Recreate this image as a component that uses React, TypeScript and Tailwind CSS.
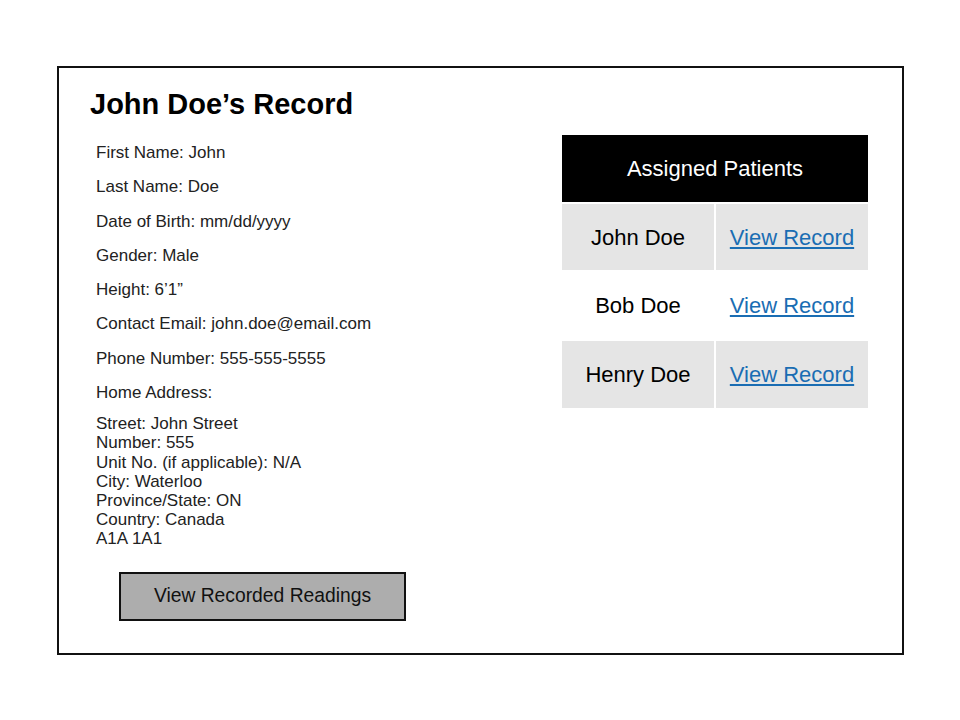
import React from "react";

const fields = [
  "First Name: John",
  "Last Name: Doe",
  "Date of Birth: mm/dd/yyyy",
  "Gender: Male",
  "Height: 6\u20191\u201d",
  "Contact Email: john.doe@email.com",
  "Phone Number: 555-555-5555",
  "Home Address:",
];

const address = [
  "Street: John Street",
  "Number: 555",
  "Unit No. (if applicable): N/A",
  "City: Waterloo",
  "Province/State: ON",
  "Country: Canada",
  "A1A 1A1",
];

const patients = ["John Doe", "Bob Doe", "Henry Doe"];

export default function App() {
  return (
    <div
      className="w-[960px] h-[720px] bg-white pt-[66px] pl-[57px]"
      style={{ fontFamily: '"Liberation Sans", Arial, sans-serif' }}
    >
      <div className="w-[847px] h-[589px] border-2 border-[#111] flex">
        <div className="flex flex-col pl-[31px] pt-[20px]">
          <h1 className="text-[29px] leading-[33px] font-bold text-black">
            John Doe’s Record
          </h1>
          <div className="pl-[6px] mt-[22px] flex flex-col text-[17px] text-[#222]">
            <div className="flex flex-col gap-[14.75px] leading-[19.5px]">
              {fields.map((f) => (
                <div key={f}>{f}</div>
              ))}
            </div>
            <div className="mt-[12px] leading-[19.2px]">
              {address.map((a) => (
                <div key={a}>{a}</div>
              ))}
            </div>
          </div>
          <button className="ml-[29px] mt-[23.5px] w-[287px] h-[49px] border-2 border-[#111] bg-[#adadad] text-[19.3px] text-[#111] flex items-center justify-center">
            View Recorded Readings
          </button>
        </div>
        <div className="ml-auto mr-[34px] pt-[67px]">
          <div className="grid grid-cols-[152px_152px] grid-rows-[67px_66px_67px_67px] gap-[2px] text-[22px]">
            <div className="col-span-2 bg-black text-white flex items-center justify-center">
              Assigned Patients
            </div>
            {patients.map((p, i) => (
              <React.Fragment key={p}>
                <div
                  className={
                    (i % 2 === 0 ? "bg-[#e5e5e5] " : "bg-white ") +
                    "flex items-center justify-center text-black"
                  }
                >
                  {p}
                </div>
                <div
                  className={
                    (i % 2 === 0 ? "bg-[#e5e5e5] " : "bg-white ") +
                    "flex items-center justify-center"
                  }
                >
                  <a href="#" className="text-[#1a6db3] underline">
                    View Record
                  </a>
                </div>
              </React.Fragment>
            ))}
          </div>
        </div>
      </div>
    </div>
  );
}
